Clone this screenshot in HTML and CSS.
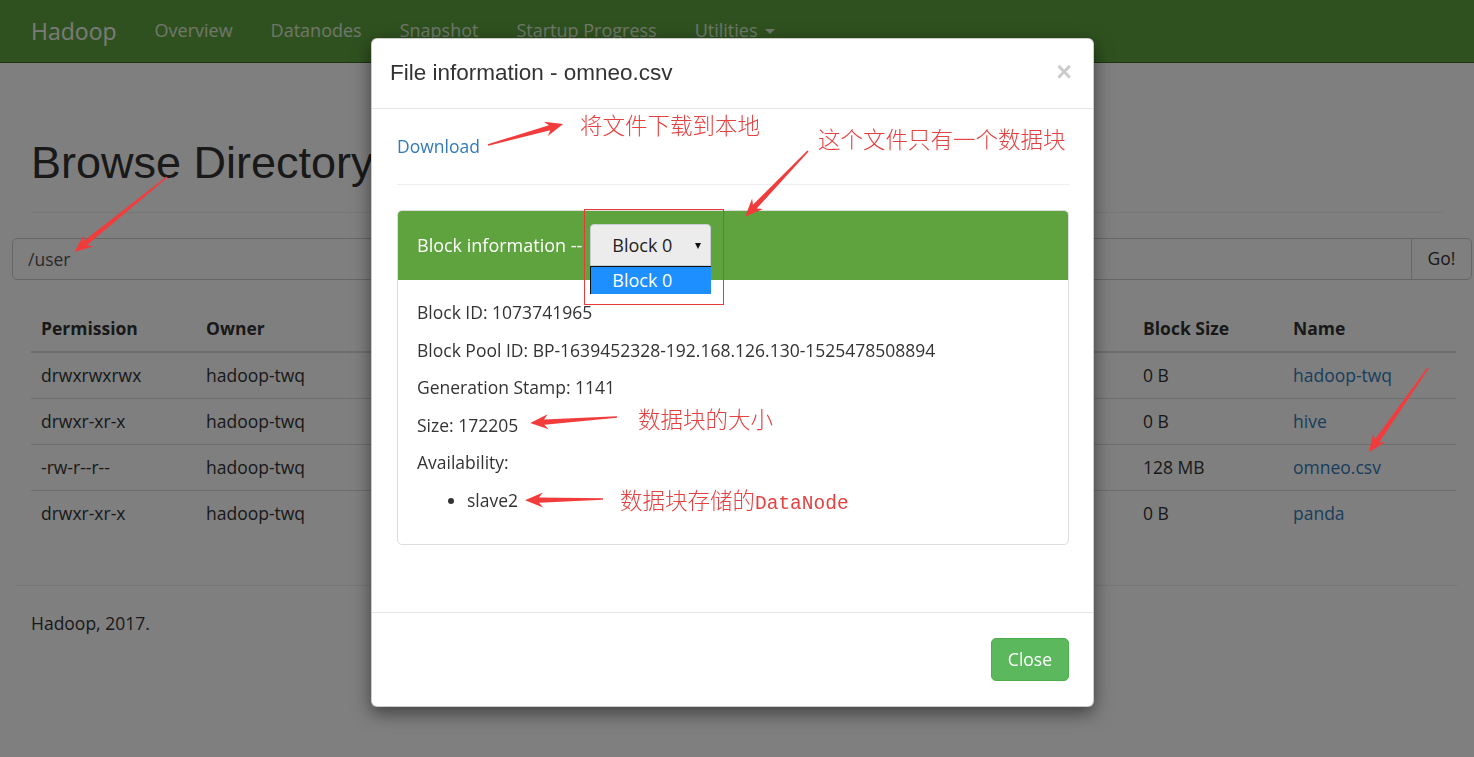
FILE: index.html
```html
<!DOCTYPE html>
<html>
<head>
    <title>Browsing HDFS</title>
    <link rel="stylesheet" href="styles.css">
</head>
<body>
    <nav class="navbar">
        <a class="brand">Hadoop</a>
        <ul class="nav">
            <li>Overview</li>
            <li>Datanodes</li>
            <li>Snapshot</li>
            <li>Startup Progress</li>
            <li>Utilities <span class="caret"></span></li>
        </ul>
    </nav>

    <div class="page">
        <div class="page-header">
            <h1>Browse Directory</h1>
        </div>
        <div class="input-group">
            <input class="path" type="text" value="/user">
            <button class="go">Go!</button>
        </div>
        <table class="listing">
            <colgroup>
                <col style="width:165px"><col style="width:180px"><col style="width:180px">
                <col style="width:110px"><col style="width:317px"><col style="width:150px">
                <col style="width:150px"><col style="width:173px">
            </colgroup>
            <thead>
                <tr><th>Permission</th><th>Owner</th><th>Group</th><th>Size</th><th>Last Modified</th><th>Replication</th><th>Block Size</th><th>Name</th></tr>
            </thead>
            <tbody>
                <tr><td>drwxrwxrwx</td><td>hadoop-twq</td><td>supergroup</td><td>0 B</td><td>2018/5/5 下午1:06:12</td><td>0</td><td>0 B</td><td><a>hadoop-twq</a></td></tr>
                <tr><td>drwxr-xr-x</td><td>hadoop-twq</td><td>supergroup</td><td>0 B</td><td>2018/5/5 下午1:12:40</td><td>0</td><td>0 B</td><td><a>hive</a></td></tr>
                <tr><td>-rw-r--r--</td><td>hadoop-twq</td><td>supergroup</td><td>168.17 KB</td><td>2018/5/6 上午9:31:05</td><td>1</td><td>128 MB</td><td><a>omneo.csv</a></td></tr>
                <tr><td>drwxr-xr-x</td><td>hadoop-twq</td><td>supergroup</td><td>0 B</td><td>2018/5/6 上午9:44:18</td><td>0</td><td>0 B</td><td><a>panda</a></td></tr>
            </tbody>
        </table>
        <hr class="footer-rule">
        <p class="footer">Hadoop, 2017.</p>
    </div>

    <div class="backdrop"></div>

    <div class="modal">
        <div class="modal-header">
            <h4 class="modal-title">File information - omneo.csv</h4>
            <span class="close">&times;</span>
        </div>
        <div class="modal-body">
            <a class="download">Download</a>
            <hr class="rule">
            <div class="panel">
                <div class="panel-heading">
                    <span>Block information --</span>
                    <div class="select">
                        Block 0 <span class="arrow"></span>
                        <div class="options">Block 0</div>
                    </div>
                </div>
                <div class="panel-body">
                    <p>Block ID: 1073741965</p>
                    <p>Block Pool ID: BP-1639452328-192.168.126.130-1525478508894</p>
                    <p>Generation Stamp: 1141</p>
                    <p>Size: 172205</p>
                    <p>Availability:</p>
                    <ul><li>slave2</li></ul>
                </div>
            </div>
        </div>
        <div class="modal-footer">
            <button class="btn-close">Close</button>
        </div>
    </div>

    <svg class="marks" width="1474" height="757" viewBox="0 0 1474 757">
        <rect x="584.5" y="209.5" width="139" height="95" fill="none" stroke="#e83a3a" stroke-width="1"/>
        <g fill="#f23c3c">
            <polygon transform="translate(488 145) rotate(-15.6)" points="0,-0.8 64,-2.6 60,-7.5 78,0 60,7.5 64,2.6 0,0.8"/>
            <polygon transform="translate(808 151) rotate(133.7)" points="0,-0.8 77,-2.6 73,-7.5 91,0 73,7.5 77,2.6 0,0.8"/>
            <polygon transform="translate(167 177) rotate(141)" points="0,-0.8 105,-2.6 101,-7.5 119,0 101,7.5 105,2.6 0,0.8"/>
            <polygon transform="translate(1428 368) rotate(125)" points="0,-0.8 89,-2.6 85,-7.5 103,0 85,7.5 89,2.6 0,0.8"/>
            <polygon transform="translate(617 417) rotate(176)" points="0,-0.8 73,-2.6 69,-7.5 87,0 69,7.5 73,2.6 0,0.8"/>
            <polygon transform="translate(603 499) rotate(179)" points="0,-0.8 64,-2.6 60,-7.5 78,0 60,7.5 64,2.6 0,0.8"/>
        </g>
    </svg>

    <div class="note note-download">将文件下载到本地</div>
    <div class="note note-block">这个文件只有一个数据块</div>
    <div class="note note-size">数据块的大小</div>
    <div class="note note-node">数据块存储的<span class="mono">DataNode</span></div>
</body>
</html>
```

FILE: styles.css
```css
body {
    margin: 0;
    font-family: "Open Sans", "Liberation Sans", sans-serif;
    font-size: 17.5px;
    line-height: 25px;
    color: #333;
    background: #fff;
}
a {
    color: #337ab7;
}

/* top bar */
.navbar {
    height: 62px;
    display: flex;
    align-items: center;
    padding-left: 31px;
    background: #5fa33e;
    border-bottom: 1px solid #3b6a25;
}
.brand {
    font-size: 23px;
    color: #f4f7f2;
    margin-right: 19px;
}
.nav {
    display: flex;
    list-style: none;
    margin: 0;
    padding: 0;
}
.nav li {
    padding: 0 19px;
    font-size: 18px;
    color: #dfeed6;
    margin-top: -2px;
}
.caret {
    display: inline-block;
    width: 0;
    height: 0;
    margin-left: 3px;
    vertical-align: middle;
    border-top: 5px solid;
    border-left: 5px solid transparent;
    border-right: 5px solid transparent;
}

/* page */
.page-header {
    margin: 75px 31px 25px;
    padding-bottom: 24px;
    border-bottom: 1px solid #eee;
}
h1 {
    margin: 0;
    font-family: "Liberation Sans", Arial, sans-serif;
    font-size: 45px;
    line-height: 49.5px;
    font-weight: 400;
    color: #333;
}
.input-group {
    display: flex;
    height: 42px;
    margin: 0 2px 0 12px;
}
.path {
    flex: 1;
    height: 42px;
    box-sizing: border-box;
    padding: 0 15px;
    border: 1px solid #ccc;
    border-radius: 5px 0 0 5px;
    font: inherit;
    color: #555;
    background: #fff;
}
.go {
    width: 61px;
    height: 42px;
    margin-left: -1px;
    border: 1px solid #ccc;
    border-radius: 0 5px 5px 0;
    background: #fff;
    font: inherit;
    color: #333;
}
.listing {
    width: 1425px;
    margin: 26px 0 0 31px;
    border-collapse: collapse;
    table-layout: fixed;
    font-size: 17.5px;
    line-height: 25px;
}
.listing th,
.listing td {
    padding: 10px;
    text-align: left;
    white-space: nowrap;
    overflow: hidden;
    border-top: 1px solid #ddd;
}
.listing th {
    font-weight: 700;
    border-top: 0;
    border-bottom: 2px solid #ddd;
}
.footer-rule {
    margin: 49px 16px 0;
    border: 0;
    border-top: 1px solid #eee;
}
.footer {
    margin: 25px 31px;
}

/* dialog */
.backdrop {
    position: fixed;
    top: 0;
    left: 0;
    right: 0;
    bottom: 0;
    background: rgba(0, 0, 0, 0.5);
    z-index: 10;
}
.modal {
    position: absolute;
    top: 38px;
    left: 371px;
    width: 723px;
    box-sizing: border-box;
    background: #fff;
    border: 1px solid rgba(0, 0, 0, 0.2);
    border-radius: 6px;
    box-shadow: 0 6px 18px rgba(0, 0, 0, 0.5);
    z-index: 20;
}
.modal-header {
    height: 70px;
    box-sizing: border-box;
    padding: 0 21px 3px 18px;
    display: flex;
    align-items: center;
    justify-content: space-between;
    border-bottom: 1px solid #e5e5e5;
}
.modal-title {
    margin: 0;
    font-family: "Liberation Sans", Arial, sans-serif;
    font-size: 22.5px;
    font-weight: 400;
    color: #333;
}
.close {
    font-family: "Liberation Sans", Arial, sans-serif;
    font-size: 27px;
    font-weight: 700;
    color: #000;
    opacity: 0.2;
}
.modal-body {
    padding: 25px 24px 42px 25px;
}
.download {
    display: block;
}
.rule {
    margin: 25px 0;
    border: 0;
    border-top: 1px solid #eee;
}
.panel {
    border: 1px solid #ddd;
    border-radius: 5px;
    margin-bottom: 25px;
}
.panel-heading {
    display: flex;
    align-items: center;
    padding: 13px 19px 14px;
    background: #5fa33e;
    color: #fff;
    font-size: 18px;
    border-radius: 4px 4px 0 0;
}
.select {
    position: relative;
    width: 121px;
    height: 42px;
    box-sizing: border-box;
    margin-left: 8px;
    padding-left: 21px;
    display: flex;
    align-items: center;
    font-size: 18px;
    color: #222;
    background: #ececec;
    border: 1px solid #c9ced6;
    border-radius: 4px 4px 0 0;
}
.arrow {
    position: absolute;
    right: 9px;
    top: 18px;
    border-top: 6px solid #111;
    border-left: 3.5px solid transparent;
    border-right: 3.5px solid transparent;
}
.options {
    position: absolute;
    top: 41px;
    left: -1px;
    width: 121px;
    height: 28px;
    box-sizing: border-box;
    padding-left: 21px;
    line-height: 26px;
    color: #fff;
    background: #1e8fff;
    border-top: 1px solid #111;
    border-left: 1px solid #111;
}
.panel-body {
    padding: 20px 19px 19px;
}
.panel-body p {
    margin: 0 0 12.5px;
}
.panel-body ul {
    margin: 0 0 12.5px;
    padding-left: 50px;
}
.modal-footer {
    padding: 25px 24px 25px;
    text-align: right;
    border-top: 1px solid #e5e5e5;
}
.btn-close {
    height: 43px;
    padding: 0 16px;
    font: inherit;
    color: #fff;
    background: #5cb85c;
    border: 1px solid #4cae4c;
    border-radius: 5px;
}

/* red annotations drawn over the screenshot */
.marks {
    position: absolute;
    top: 0;
    left: 0;
    z-index: 30;
}
.note {
    position: absolute;
    z-index: 30;
    font-family: "Noto Sans CJK SC", sans-serif;
    font-weight: 300;
    font-size: 22.5px;
    line-height: 24px;
    color: #e64141;
    white-space: nowrap;
}
.note-download {
    left: 580px;
    top: 112px;
}
.note-block {
    left: 818px;
    top: 126px;
}
.note-size {
    left: 638px;
    top: 406px;
}
.note-node {
    left: 620px;
    top: 487px;
}
.mono {
    font-family: "Liberation Mono", monospace;
    font-size: 19.5px;
}
```
